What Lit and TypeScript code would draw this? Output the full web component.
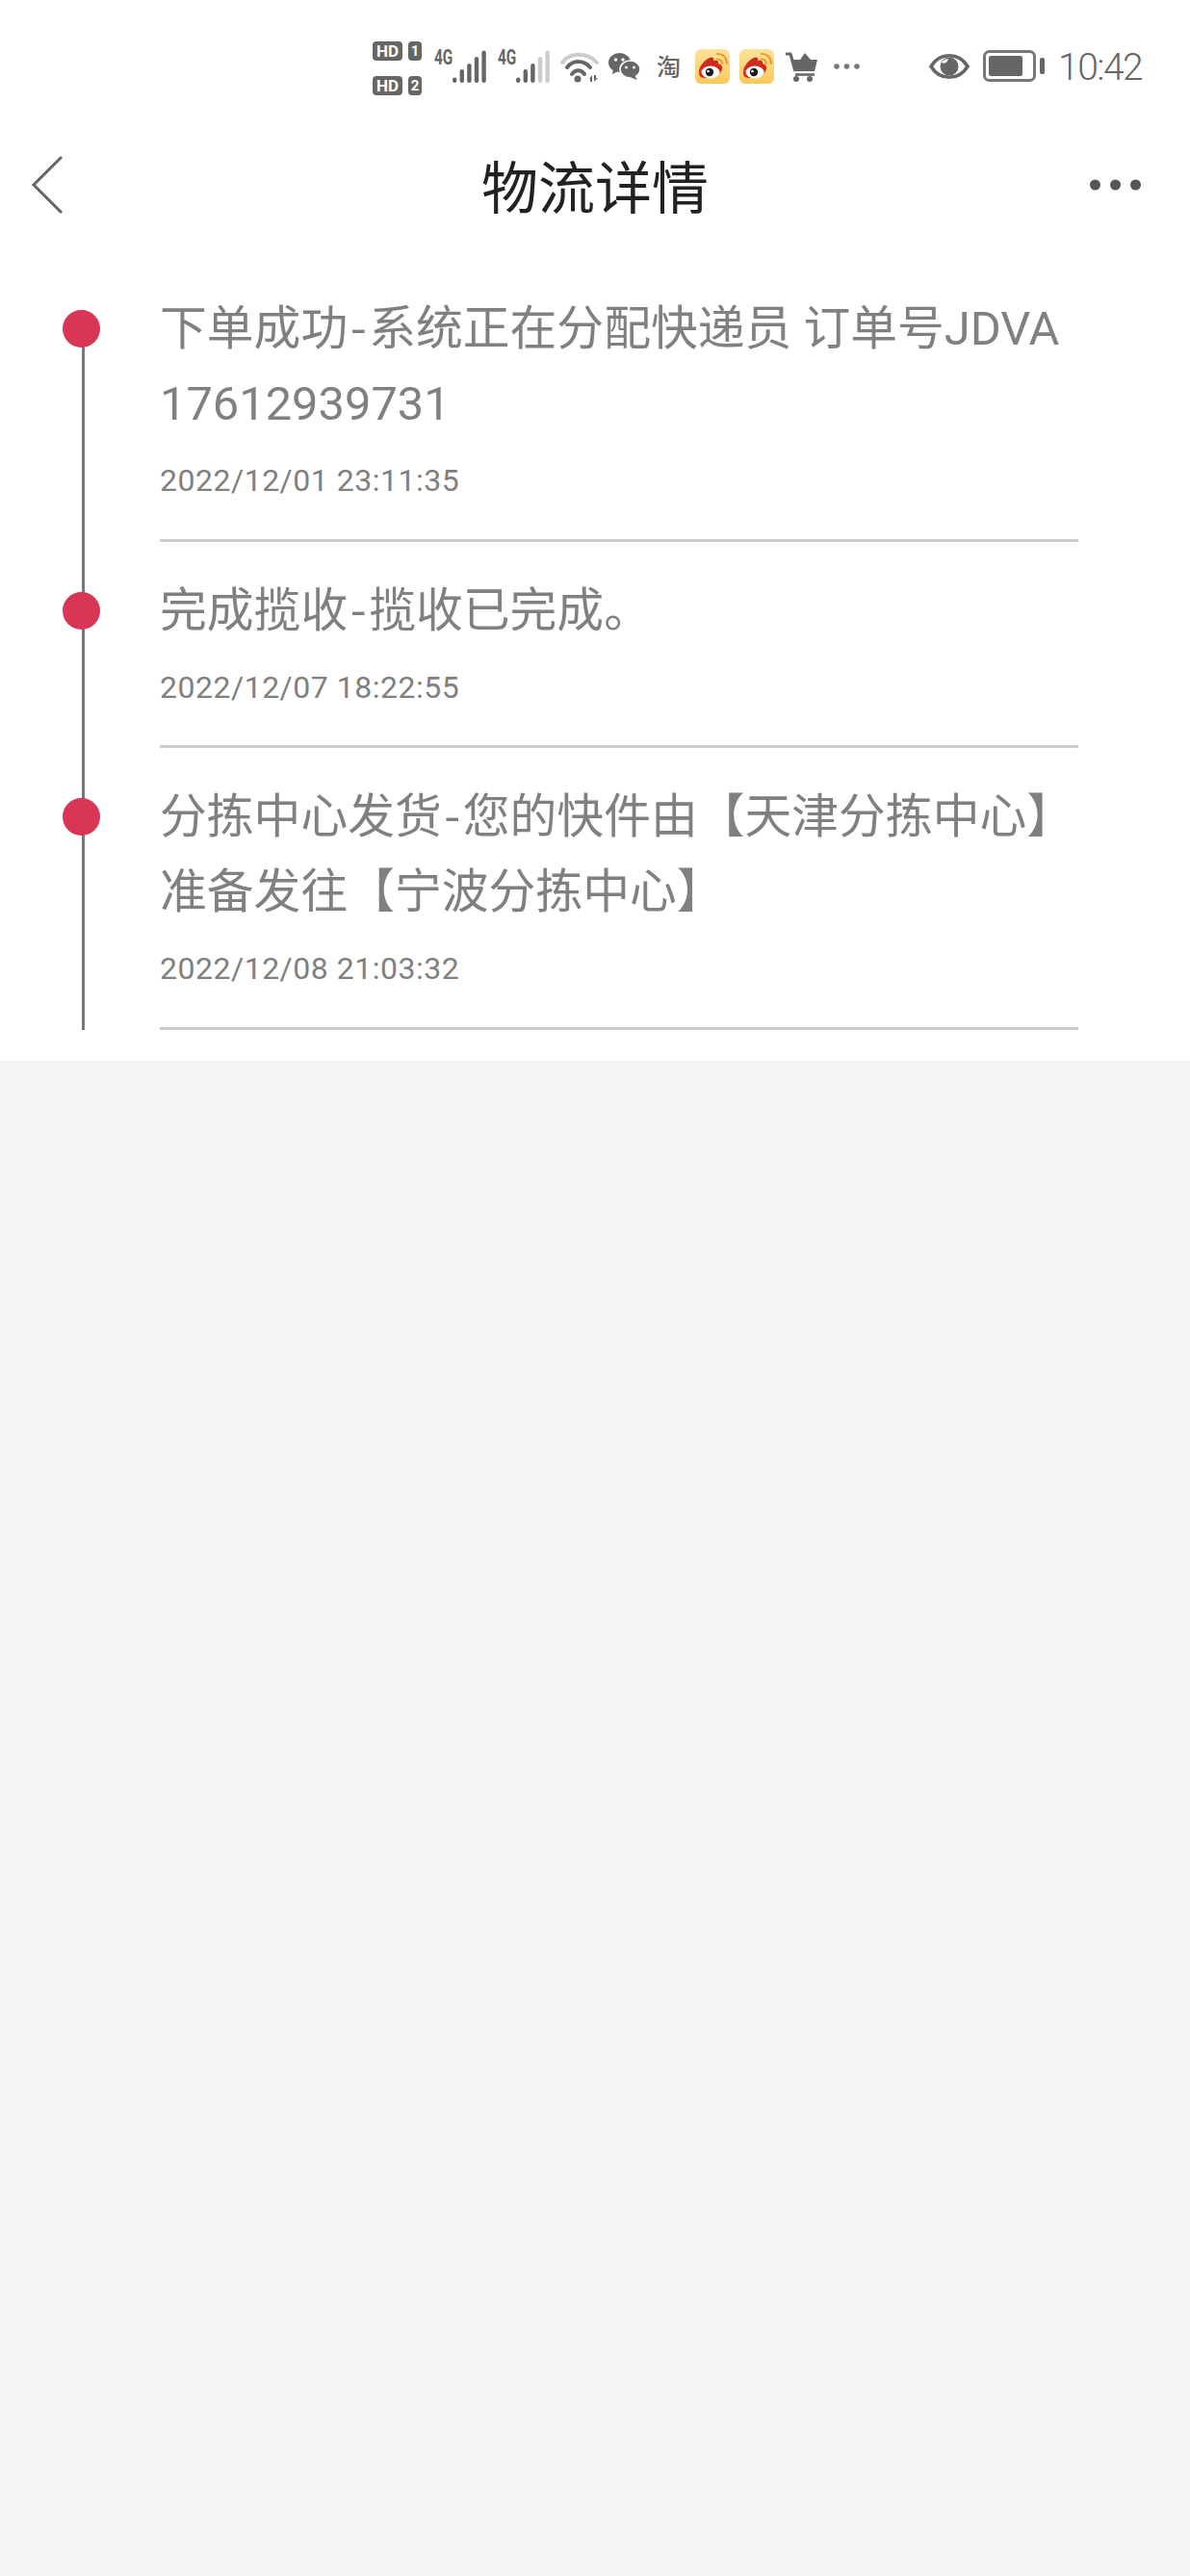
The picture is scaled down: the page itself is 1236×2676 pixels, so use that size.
import { LitElement, html, css, svg } from "lit";
import { customElement } from "lit/decorators.js";

const GREY = "#666";

const hd = (n: string) => html`<div class="hd"><span class="hdbox">HD</span><span class="hdnum">${n}</span></div>`;

const signal = (active: number, cls: string) => html`<div class="sig ${cls}"><span class="four">4G</span>
  <svg width="35" height="34" viewBox="0 0 35 34">
    ${[5.5, 14, 20, 27, 33.5].map(
      (h, i) => svg`<rect x="${i * 7.6}" y="${34 - h}" width="4.4" height="${h}" rx="2.2" fill="${i < active ? GREY : "#ccc"}"/>`
    )}
  </svg></div>`;

const weibo = (id: string, cls: string) => html`<svg class="${cls}" width="36" height="36" viewBox="0 0 36 36">
  <defs>
    <linearGradient id="${id}" x1="0" y1="0" x2="0" y2="1">
      <stop offset="0" stop-color="#fbe39b"/><stop offset="1" stop-color="#fcc85a"/>
    </linearGradient>
  </defs>
  <rect width="36" height="36" rx="6" fill="url(#${id})"/>
  <path d="M4 24c0-6 5-12 11-15 3-1.500 5 0 4 3 4-1 6 1 5 3 3 1 5 3 4 6-1 5-8 9-15 9S4 29 4 24z" fill="#cf2a1e"/>
  <ellipse cx="16" cy="24" rx="9.500" ry="6.500" fill="#fff"/>
  <circle cx="15" cy="24" r="4.200" fill="#1b1b1b"/>
  <circle cx="13.500" cy="23" r="1.300" fill="#fff"/>
  <path d="M23 5c6 0 10 4 10 10" fill="none" stroke="#ee9a2e" stroke-width="2.200" stroke-linecap="round"/>
  <path d="M23 10.500c3 0 4.800 2 4.800 4.500" fill="none" stroke="#ee9a2e" stroke-width="2.200" stroke-linecap="round"/>
</svg>`;

const items = [
  { lines: ["下单成功-系统正在分配快递员 订单号JDVA", "17612939731"], time: "2022/12/01 23:11:35" },
  { lines: ["完成揽收-揽收已完成。"], time: "2022/12/07 18:22:55" },
  { lines: ["分拣中心发货-您的快件由【天津分拣中心】", "准备发往【宁波分拣中心】"], time: "2022/12/08 21:03:32" },
];

const withHyphen = (line: string) => {
  const at = line.indexOf("-");
  if (at < 0) return line;
  return html`${line.slice(0, at)}<span class="hy">-</span>${line.slice(at + 1)}`;
};

@customElement("app-root")
export class AppRoot extends LitElement {
  static styles = css`
    :host {
      display: block;
      width: 1236px;
      height: 2676px;
      background: #f5f5f5;
      font-family: "Roboto", "Noto Sans CJK SC", sans-serif;
      overflow: hidden;
    }
    .top { background: #fff; height: 1102px; }
    .status {
      height: 122px;
      display: flex;
      align-items: flex-start;
      padding-left: 387px;
      box-sizing: border-box;
    }
    .status > * { flex: none; }
    .hds { display: flex; flex-direction: column; gap: 16px; margin-top: 43px; width: 51px; }
    .hd { display: flex; gap: 6px; height: 20px; }
    .hdbox, .hdnum {
      background: #666; color: #fff; border-radius: 4px;
      font: 700 17px/20px "Roboto", sans-serif; text-align: center; height: 20px;
    }
    .hdbox { width: 31px; }
    .hdnum { width: 14px; font-size: 15px; }
    .sig { width: 54px; height: 34px; margin-top: 52px; display: flex; }
    .sig1 { margin-left: 13px; }
    .sig2 { margin-left: 12px; }
    .four {
      font: 700 22px/16px "Roboto", sans-serif; color: #666; width: 19px; flex: none;
      transform: scaleX(.7); transform-origin: left top; white-space: nowrap;
    }
    .wifi { margin: 52px 0 0 11px; }
    .wechat { margin: 55px 0 0 10px; }
    .tao {
      font: 500 25px/28px "Noto Sans CJK SC", sans-serif; color: #666;
      margin: 54px 0 0 17px; width: 25px;
    }
    .wb1 { margin: 51px 0 0 15px; }
    .wb2 { margin: 51px 0 0 10px; }
    .cart { margin: 53px 0 0 11px; }
    .more { margin: 66px 0 0 17px; }
    .eye { margin: 55px 0 0 72px; }
    .bat { margin: 52px 0 0 14px; }
    .clock {
      font: 300 39px/44px "Roboto", sans-serif; color: #666; margin: 48px 0 0 14px;
      letter-spacing: -1.500px; white-space: nowrap;
    }
    .nav {
      height: 140px;
      display: grid;
      grid-template-columns: 1fr auto 1fr;
      align-items: center;
    }
    .back { margin-left: 32px; display: block; }
    .title { font-size: 59px; line-height: 70px; color: #222; font-weight: 400; white-space: nowrap; font-family: "Noto Sans CJK SC", sans-serif; }
    .dots { justify-self: end; margin-right: 51px; display: block; }
    .list { padding-top: 8px; }
    .item { display: flex; }
    .rail { position: relative; width: 166px; flex: none; }
    .rail::before {
      content: ""; position: absolute; left: 85px; top: 0; bottom: 0; width: 3px; background: #777;
    }
    .item:first-child .rail::before { top: 52px; }
    .dot {
      position: absolute; left: 65px; top: 52px; width: 39px; height: 39px;
      border-radius: 50%; background: #d93554;
    }
    .body {
      width: 954px;
      border-bottom: 3px solid #ccc;
      box-sizing: border-box;
      padding: 33px 0 43px;
    }
    .item:nth-child(2) .body { padding-bottom: 42px; }
    .line { font-size: 48.800px; line-height: 78px; height: 78px; color: #808080; white-space: nowrap; }
    .hy { font-family: "Noto Sans CJK SC", sans-serif; padding: 0 2.500px; line-height: 0; }
    .time { font: 400 32px/36px "Roboto", sans-serif; letter-spacing: .5px; color: #808080; margin-top: 22px; }
  `;

  render() {
    return html`
      <div class="top">
        <div class="status">
          <div class="hds">${hd("1")}${hd("2")}</div>
          ${signal(5, "sig1")}
          ${signal(3, "sig2")}
          <svg class="wifi" width="40" height="34" viewBox="0 0 40 34" fill="none">
            <path d="M2 13C10 2 28 2 38 13" stroke="#ccc" stroke-width="4" stroke-linecap="round"/>
            <path d="M7 18C13 10 24 10 31 18" stroke="#666" stroke-width="4" stroke-linecap="round"/>
            <path d="M12 25C15 20 22 20 25 25" stroke="#666" stroke-width="4" stroke-linecap="round"/>
            <circle cx="18" cy="30" r="3.500" fill="#666"/>
            <path d="M31 33v-3h-1l3-4v7zM35 26v7l4-4h-2v-3z" fill="#666"/>
          </svg>
          <svg class="wechat" width="33" height="28" viewBox="0 0 33 28">
            <ellipse cx="11.500" cy="10" rx="11.500" ry="10" fill="#666"/>
            <path d="M5 16l-1 6 6-3z" fill="#666"/>
            <ellipse cx="22.500" cy="17" rx="10.500" ry="9" fill="#666" stroke="#fff" stroke-width="1.500"/>
            <path d="M27 23l3 5-7-2.500z" fill="#666"/>
            <circle cx="7.500" cy="7" r="1.700" fill="#fff"/><circle cx="15" cy="7" r="1.700" fill="#fff"/>
            <circle cx="18.500" cy="15" r="1.500" fill="#fff"/><circle cx="26.500" cy="15" r="1.500" fill="#fff"/>
          </svg>
          <span class="tao">淘</span>
          ${weibo("wb-a", "wb1")}
          ${weibo("wb-b", "wb2")}
          <svg class="cart" width="34" height="32" viewBox="0 0 34 32" fill="none">
            <path d="M1 3h5l5 18" stroke="#666" stroke-width="3.200" stroke-linejoin="round"/>
            <path d="M7 9h9l5-7 6 7h7l-3 12H10z" fill="#666"/>
            <path d="M11 24.500h20" stroke="#666" stroke-width="2.600"/>
            <circle cx="12" cy="29" r="3" fill="#666"/><circle cx="26" cy="29" r="3" fill="#666"/>
          </svg>
          <svg class="more" width="27" height="6" viewBox="0 0 27 6" fill="#777">
            <circle cx="3" cy="3" r="2.800"/><circle cx="13.500" cy="3" r="2.800"/><circle cx="24" cy="3" r="2.800"/>
          </svg>
          <svg class="eye" width="42" height="28" viewBox="0 0 42 28" fill="none">
            <path d="M2 14C11 -1 31 -1 40 14C31 29 11 29 2 14Z" stroke="#666" stroke-width="3.600"/>
            <circle cx="21" cy="14" r="9.500" fill="#666"/>
            <path d="M13 10c2-3 5-4 7-4-1 3-3 6-7 4z" fill="#fff"/>
          </svg>
          <svg class="bat" width="64" height="33" viewBox="0 0 64 33" fill="none">
            <rect x="1.500" y="1.500" width="52" height="30" rx="5" stroke="#777" stroke-width="3"/>
            <rect x="6" y="6" width="35" height="21" rx="2" fill="#666"/>
            <rect x="59" y="8" width="5" height="17" rx="2" fill="#666"/>
          </svg>
          <span class="clock">10:42</span>
        </div>
        <div class="nav">
          <svg class="back" width="34" height="62" viewBox="0 0 34 62" fill="none">
            <path d="M32 2L3 31L32 60" stroke="#666" stroke-width="3"/>
          </svg>
          <div class="title">物流详情</div>
          <svg class="dots" width="53" height="12" viewBox="0 0 53 12" fill="#555">
            <circle cx="5.500" cy="6" r="5.500"/><circle cx="26.500" cy="6" r="5.500"/><circle cx="47.500" cy="6" r="5.500"/>
          </svg>
        </div>
        <div class="list">
          ${items.map(
            (it) => html`<div class="item">
              <div class="rail"><span class="dot"></span></div>
              <div class="body">
                ${it.lines.map((l) => html`<div class="line">${withHyphen(l)}</div>`)}
                <div class="time">${it.time}</div>
              </div>
            </div>`
          )}
        </div>
      </div>
    `;
  }
}
